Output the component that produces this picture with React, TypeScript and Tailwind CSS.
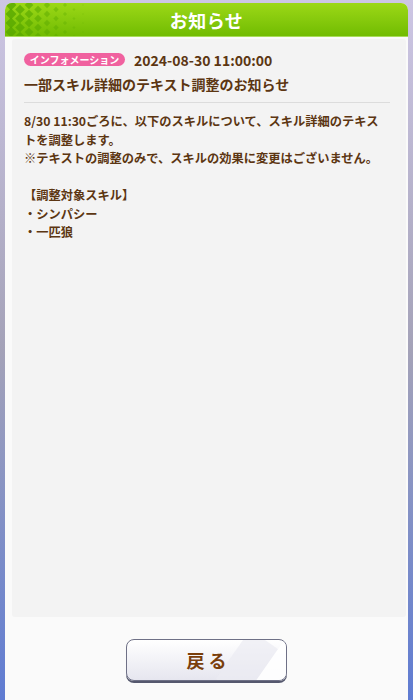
const font = { fontFamily: '"Noto Sans CJK JP", "Noto Sans", sans-serif' };

function DiamondPattern() {
  const items: { x: number; y: number; r: number; o: number }[] = [];
  for (let c = 0; c < 9; c++) {
    for (let r = 0; r < 4; r++) {
      const x = 6 + c * 9;
      const y = (c % 2 === 0 ? 2 : 6.5) + r * 9;
      const size = Math.max(0.8, 5.4 - c * 0.55);
      items.push({ x, y, r: size, o: Math.max(0.15, 0.8 - c * 0.08) });
    }
  }
  return (
    <svg className="absolute left-0 top-0" width="90" height="34" viewBox="0 0 90 34">
      {items.map((d, i) => (
        <polygon
          key={i}
          points={`${d.x},${d.y - d.r} ${d.x + d.r},${d.y} ${d.x},${d.y + d.r} ${d.x - d.r},${d.y}`}
          fill="#58a800"
          opacity={d.o}
        />
      ))}
    </svg>
  );
}

export default function App() {
  const lines = [
    "8/30 11:30ごろに、以下のスキルについて、スキル詳細のテキス",
    "トを調整します。",
    "※テキストの調整のみで、スキルの効果に変更はございません。",
    "\u00a0",
    "【調整対象スキル】",
    "・シンパシー",
    "・一匹狼",
  ];

  return (
    <div
      className="h-[700px] w-[413px] overflow-hidden bg-gradient-to-b from-[#cdc6e4] via-[#a4a2b8] to-[#5f7bd2] pl-[5px] pt-[3px]"
      style={font}
    >
      <div className="flex h-[697px] w-[403px] flex-col rounded-t-[7px] bg-[#fafafa]">
        {/* header */}
        <div className="relative flex h-[34px] items-center justify-center overflow-hidden rounded-t-[7px] border-b border-[#a8dc5a] bg-gradient-to-b from-[#9cd816] to-[#71bc02]">
          <DiamondPattern />
          <span className="relative text-[18px] font-bold leading-none tracking-[0.5px] text-white">お知らせ</span>
        </div>

        {/* content */}
        <div className="pl-[7px] pr-[2px] pt-[2px]">
          <div className="h-[578px] rounded-[3px] bg-[#f3f3f3] px-[12px] pt-[14px] text-[#5c3612]">
            <div className="flex h-[13px] items-center gap-[9px]">
              <span className="flex h-[13px] w-[101px] items-center justify-center rounded-full bg-[#f0619f] text-[10px] font-bold leading-none text-white">
                インフォメーション
              </span>
              <span className="text-[14px] font-bold leading-none">2024-08-30 11:00:00</span>
            </div>
            <div className="mt-[8px] h-[20px] text-[14px] font-bold leading-[20px]">
              一部スキル詳細のテキスト調整のお知らせ
            </div>
            <div className="mt-[8px] h-px w-[366px] bg-[#dcdcdc]" />
            <div className="mt-[9px] text-[12.25px] font-bold leading-[18.5px]">
              {lines.map((l, i) => (
                <div key={i} className="whitespace-nowrap">
                  {l}
                </div>
              ))}
            </div>
          </div>
        </div>

        {/* footer */}
        <div className="flex justify-center pt-[22px]">
          <button className="relative flex h-[42px] w-[161px] items-center justify-center overflow-hidden rounded-[8px] border-[1.5px] border-[#6e7086] bg-gradient-to-b from-[#ffffff] to-[#e6e6ef] shadow-[0_2px_0_#55586e]">
            <span className="absolute right-[22px] top-[-6px] h-[60px] w-[34px] rotate-[35deg] bg-[#ebebf2] opacity-70" />
            <span className="absolute right-[-6px] top-[-6px] h-[60px] w-[22px] rotate-[35deg] bg-white opacity-90" />
            <span className="relative text-[18px] font-bold leading-none text-[#7a3f0c]">戻 る</span>
          </button>
        </div>
      </div>
    </div>
  );
}
